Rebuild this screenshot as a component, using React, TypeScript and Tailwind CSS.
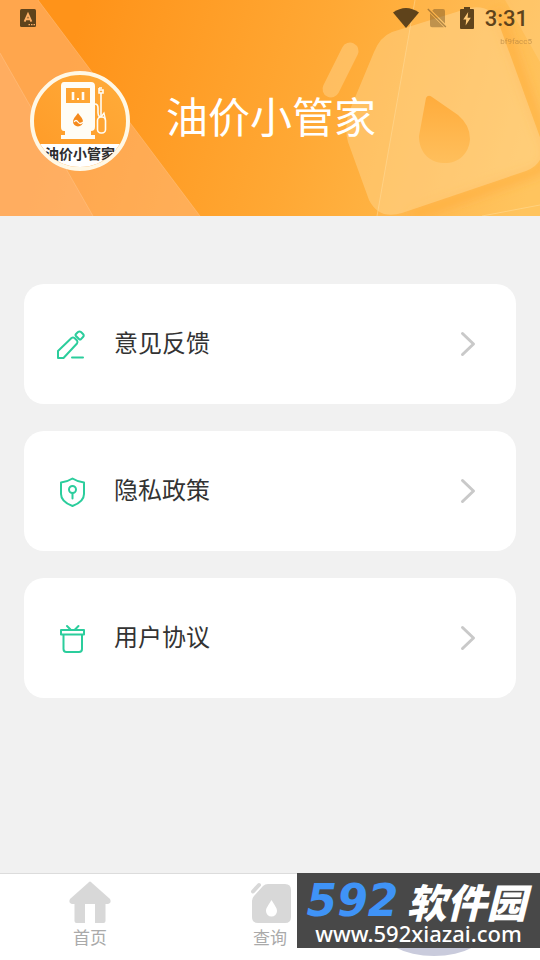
import type { ReactNode } from "react";

function HeaderArt() {
    return (
        <svg
            className="absolute inset-0 h-full w-full"
            viewBox="0 0 540 216"
            preserveAspectRatio="xMidYMid slice"
            aria-hidden="true"
        >
            <defs>
                <linearGradient id="sky" gradientUnits="userSpaceOnUse" x1="80" y1="20" x2="540" y2="150">
                    <stop offset="0" stopColor="#ff9319" />
                    <stop offset="0.5" stopColor="#ffa834" />
                    <stop offset="1" stopColor="#ffc156" />
                </linearGradient>
                <linearGradient id="drop" x1="0" y1="0" x2="0" y2="1">
                    <stop offset="0" stopColor="#ffac3c" />
                    <stop offset="1" stopColor="#ffbf5c" />
                </linearGradient>
                <filter id="soft" x="-20%" y="-20%" width="140%" height="140%">
                    <feGaussianBlur stdDeviation="5" />
                </filter>
            </defs>
            <rect width="540" height="216" fill="url(#sky)" />
            <path d="M0 0H38L200 216H0Z" fill="#ffc49a" fillOpacity="0.4" />
            <path d="M0 53L93 216H0Z" fill="#ffc49a" fillOpacity="0.25" />
            <path d="M0 53L93 216M38 0L200 216" stroke="#ffd0a0" strokeOpacity="0.35" />
            <path d="M505 0L540 62V0Z" fill="#fff" fillOpacity="0.1" />
            <path
                d="M497 10L546 146Q550 164 534 172L410 216"
                fill="none"
                stroke="#ffa52c"
                strokeOpacity="0.45"
                strokeWidth="12"
                filter="url(#soft)"
            />
            <path
                d="M392 32L466 9Q490 2 499 24L541 140Q547 163 526 171L402 213Q379 220 369 200L348 142Q344 128 349 112L374 52Q380 37 392 32Z"
                fill="#ffdc9c"
                fillOpacity="0.42"
            />
            <path d="M415 0L377 216H540V0Z" fill="#fff" fillOpacity="0.05" />
            <path d="M415 0L377 216M482 216L540 205" stroke="#ffe0a0" strokeOpacity="0.5" />
            <path d="M350 51L331 89" stroke="#ffc978" strokeOpacity="0.65" strokeWidth="17" strokeLinecap="round" />
            <path
                d="M426 98Q428 94 432 97L458 115Q470 125 470 139C469 155 457 164 443 163C428 162 419 151 419 136Z"
                fill="url(#drop)"
            />
        </svg>
    );
}

function StatusBar() {
    return (
        <div className="relative flex h-9 items-center pr-3 pl-5 text-[#5f431b]">
            <svg className="h-[18px] w-4" viewBox="0 0 16 18" aria-hidden="true">
                <rect width="16" height="18" rx="1.5" fill="currentColor" />
                <path d="M4.6 12.6L8 5L11.4 12.6M5.8 10.2H10.2" fill="none" stroke="#ffb066" strokeWidth="1.9" />
                <path d="M8.5 15.6H10M11 15.6H12.5M13.5 15.6H15" stroke="#ffb066" strokeWidth="1.2" />
            </svg>
            <div className="ml-auto flex items-center">
                <svg className="h-5 w-[26px]" viewBox="0 0 26 20" aria-hidden="true">
                    <path d="M0 4.6Q13 -4.6 26 4.6L13 20Z" fill="currentColor" />
                </svg>
                <svg className="ml-2 h-5 w-5" viewBox="0 0 20 20" aria-hidden="true">
                    <g opacity="0.4">
                        <path d="M7 1H16Q18 1 18 3V15.5L5.2 2.7ZM3 5.2L17 19.2H5Q3 19.2 3 17.2Z" fill="currentColor" />
                    </g>
                    <path d="M0.8 1L18.8 19" stroke="currentColor" strokeOpacity="0.5" strokeWidth="1.4" />
                </svg>
                <svg className="ml-3 h-[22px] w-4" viewBox="0 0 16 22" aria-hidden="true">
                    <path d="M5 0H11V2H14Q15 2 15 3V21Q15 22 14 22H2Q1 22 1 21V3Q1 2 2 2H5Z" fill="currentColor" />
                    <path d="M9.2 5L4.2 12.6H7.2L6.6 18.6L11.8 10.8H8.6Z" fill="#ffc977" />
                </svg>
                <span className="ml-[10px] pt-px font-['Roboto',sans-serif] text-[22px] leading-6 font-medium">3:31</span>
            </div>
            <span className="absolute top-9 right-2 font-['Roboto',sans-serif] text-[8px] leading-3 text-[#a87a3c] opacity-60">
                bf9facc5
            </span>
        </div>
    );
}

function Avatar() {
    return (
        <div className="flex size-[100px] shrink-0 flex-col items-center overflow-hidden rounded-full border-4 border-[#fff8e6] bg-gradient-to-tr from-[#ff9a26] to-[#ffac3a]">
            <svg className="h-[69px] w-[92px] shrink-0" viewBox="0 0 92 69" aria-hidden="true">
                <path
                    fillRule="evenodd"
                    d="M30 7H57Q61 7 61 11V52Q61 56 57 56H30Q27 56 27 52V11Q27 7 30 7ZM32 13V28H56V13Z"
                    fill="#fffdf6"
                />
                <path d="M39 17V25M49 17V25" stroke="#fffdf6" strokeWidth="2.6" />
                <path d="M43 24H45" stroke="#fffdf6" strokeWidth="2" />
                <path d="M44 38C41 42 39 44 39 46.500A5 5 0 0 0 49 46.500C49 44 47 42 44 38Z" fill="#f58a1c" />
                <path d="M40 47Q42 44 44 47T49 47" fill="none" stroke="#fffdf6" strokeWidth="1.3" />
                <path d="M31 56H57V60H61V64H27V60H31Z" fill="#fffdf6" />
                <path
                    d="M61 29Q64 29 64 33V38Q64 41 66 42M67 42V18M65 13H68M65 13V18H69V15H65"
                    fill="none"
                    stroke="#fffdf6"
                    strokeWidth="1.6"
                />
                <rect x="63.5" y="42" width="8" height="16" rx="3.5" fill="none" stroke="#fffdf6" strokeWidth="1.6" />
                <path d="M67 42L70 38L71.500 45" fill="none" stroke="#fffdf6" strokeWidth="1.3" />
            </svg>
            <div className="flex w-full grow justify-center bg-white text-[14px] leading-[18px] font-bold whitespace-nowrap text-[#2d2d2d]">
                油价小管家
            </div>
        </div>
    );
}

function MenuItem({ label, children }: { label: string; children: ReactNode }) {
    return (
        <li>
            <button type="button" className="flex h-[120px] w-full items-center rounded-[20px] bg-white pr-10 pl-8 text-left">
                <svg
                    className="mt-1 size-8"
                    viewBox="0 0 32 32"
                    fill="none"
                    stroke="#2bcd9c"
                    strokeWidth="2"
                    strokeLinecap="round"
                    strokeLinejoin="round"
                    aria-hidden="true"
                >
                    {children}
                </svg>
                <span className="ml-[26px] pb-1 text-[24px] leading-9 text-[#333]">{label}</span>
                <svg className="ml-auto h-[26px] w-4" viewBox="0 0 16 26" fill="none" aria-hidden="true">
                    <path
                        d="M2.500 2.500L13.500 13L2.500 23.500"
                        stroke="#c9c9c9"
                        strokeWidth="3"
                        strokeLinecap="round"
                        strokeLinejoin="round"
                    />
                </svg>
            </button>
        </li>
    );
}

function Tab({ label, children }: { label: string; children?: ReactNode }) {
    return (
        <a href="#" className="flex flex-col items-center pt-[5px] text-[17px] leading-5 text-[#aaa]">
            <svg className="h-12 w-12" viewBox="0 0 48 48" aria-hidden="true">
                {children}
            </svg>
            {label}
        </a>
    );
}

function SiteBadge() {
    return (
        <div className="absolute top-[-1px] right-0 flex h-[75px] w-[243px] flex-col items-center bg-[#484848] pt-2 whitespace-nowrap">
            <div className="flex items-center gap-2 leading-10 font-black italic">
                <span className="font-['DejaVu_Sans',sans-serif] text-[44px] text-[#3f93f7]">592</span>
                <span className="pr-1 text-[40px] text-white">软件园</span>
            </div>
            <div className="font-['Noto_Sans',sans-serif] text-[22px] leading-6 font-medium text-white">
                www.592xiazai.com
            </div>
        </div>
    );
}

export default function App() {
    return (
        <div className="flex min-h-screen flex-col bg-[#f1f1f1] font-['Noto_Sans_CJK_SC',sans-serif]">
            <header className="relative h-[216px] overflow-hidden">
                <HeaderArt />
                <StatusBar />
                <div className="relative flex items-center pt-[35px] pl-[30px]">
                    <Avatar />
                    <h1 className="ml-9 pb-3 text-[42px] leading-[60px] text-white">油价小管家</h1>
                </div>
            </header>

            <main className="grow px-6 pt-[68px] pb-8">
                <ul className="flex flex-col gap-[27px]">
                    <MenuItem label="意见反馈">
                        <path d="M2 28V21L15.500 8Q17 7 18.500 8L21 10.500Q22 12 21 13.500L7.500 28Z" />
                        <path d="M20 4L22 2Q23.500 1 25 2L27 4Q28.500 5.500 27 7L25 9.200Q24 10 23 9L20 6Q19 5 20 4ZM16 27.500H27" />
                    </MenuItem>
                    <MenuItem label="隐私政策">
                        <path d="M16.500 1.500Q22 5 28 5.500V17C28 23 22 27 16.500 29C11 27 5 23 5 17V5.500Q11 5 16.500 1.500Z" />
                        <circle cx="16.500" cy="12.500" r="3.500" />
                        <path d="M16.500 16V21.500" />
                    </MenuItem>
                    <MenuItem label="用户协议">
                        <path d="M5 6H28V10.500H5ZM7.500 11V25Q7.500 28 10.500 28H23Q26 28 26 25V11M11 2L14.500 5.500M22.500 2L19 5.500" />
                    </MenuItem>
                </ul>
            </main>

            <nav className="relative grid h-[87px] grid-cols-3 border-t border-[#dcdcdc] bg-white">
                <Tab label="首页">
                    <path
                        d="M22 4Q24 1 26 4L44 20Q46 24 42 25H39.500V42Q39.500 44 37.500 44H29V25H19V44H10.500Q8.500 44 8.500 42V25H6Q2 24 4 20Z"
                        fill="#d8d8d8"
                    />
                </Tab>
                <Tab label="查询">
                    <path
                        fillRule="evenodd"
                        d="M22 5H39Q45 5 45 11V38Q45 44 39 44H12Q6 44 6 38V22Q6 19 8 17L17 7Q19 5 22 5ZM25.500 21C22 27 20 29 20 32A5.500 5.500 0 0 0 31 32C31 29 29 27 25.500 21Z"
                        fill="#d8d8d8"
                    />
                    <path d="M7 12.500L13 6" stroke="#d8d8d8" strokeWidth="4" strokeLinecap="round" />
                </Tab>
                <a href="#" aria-label="我的" className="flex items-end justify-center pr-8 pb-1">
                    <span className="h-[60px] w-[110px] rounded-[50%] bg-[#c9cbdc]" />
                </a>
                <SiteBadge />
            </nav>
        </div>
    );
}
